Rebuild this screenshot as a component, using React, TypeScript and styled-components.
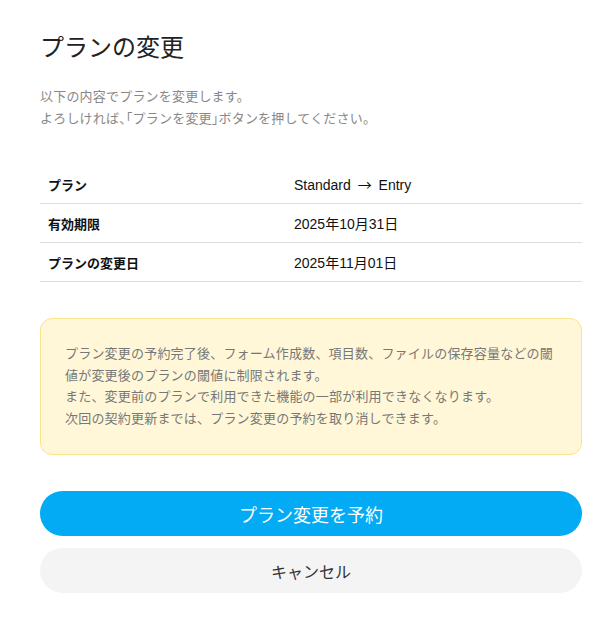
import React from "react";
import styled, { createGlobalStyle } from "styled-components";

const Global = createGlobalStyle`
  html, body { margin: 0; padding: 0; background: #fff; }
  body { font-family: "Liberation Sans", "Noto Sans CJK JP", sans-serif; color: #222; }
`;

const Page = styled.div`
  width: 542px;
  padding: 30px 28px 30px 40px;
  display: flex;
  flex-direction: column;
`;

const Title = styled.h1`
  margin: 0;
  font-size: 24px;
  font-weight: 400;
  line-height: 36px;
  color: #222;
`;

const Lead = styled.p`
  margin: 20px 0 0;
  font-size: 13px;
  line-height: 21px;
  letter-spacing: 0.2px;
  color: #888;
`;

const Punct = styled.span`
  font-family: "Noto Sans CJK JP", sans-serif;
  font-feature-settings: "halt";
`;

const Table = styled.div`
  margin-top: 36px;
  display: flex;
  flex-direction: column;
`;

const Row = styled.div`
  display: grid;
  grid-template-columns: 246px 1fr;
  height: 38px;
  align-items: center;
  padding: 0 8px;
  border-bottom: 1px solid #dedede;
`;

const Label = styled.div`
  font-size: 13px;
  font-weight: 700;
  color: #111;
`;

const Value = styled.div`
  font-size: 14px;
  color: #111;
`;

const Arrow = styled.span`
  font-family: "Noto Sans CJK JP", sans-serif;
  margin: 0 3px;
`;

const Notice = styled.div`
  margin-top: 36px;
  background: #fff7d8;
  border: 1px solid #fbe38c;
  border-radius: 12px;
  padding: 24px 24px 25px;
  font-size: 13px;
  line-height: 21.5px;
  letter-spacing: 0.2px;
  color: #777;
`;

const Actions = styled.div`
  margin-top: 36px;
  display: flex;
  flex-direction: column;
  gap: 12px;
`;

const Button = styled.button<{ $primary?: boolean }>`
  height: 45px;
  border: none;
  border-radius: 23px;
  font-family: inherit;
  font-size: ${(p) => (p.$primary ? "18px" : "16px")};
  background: ${(p) => (p.$primary ? "#03aaf4" : "#f4f4f4")};
  color: ${(p) => (p.$primary ? "#fff" : "#333")};
  cursor: pointer;
`;

export default function App() {
  return (
    <>
      <Global />
      <Page>
        <Title>プランの変更</Title>
        <Lead>
          以下の内容でプランを変更します。
          <br />
          よろしければ<Punct>、「</Punct>プランを変更<Punct>」</Punct>ボタンを押してください。
        </Lead>
        <Table>
          <Row>
            <Label>プラン</Label>
            <Value>
              Standard <Arrow>→</Arrow> Entry
            </Value>
          </Row>
          <Row>
            <Label>有効期限</Label>
            <Value>2025年10月31日</Value>
          </Row>
          <Row>
            <Label>プランの変更日</Label>
            <Value>2025年11月01日</Value>
          </Row>
        </Table>
        <Notice>
          プラン変更の予約完了後、フォーム作成数、項目数、ファイルの保存容量などの閾値が変更後のプランの閾値に制限されます。
          <br />
          また、変更前のプランで利用できた機能の一部が利用できなくなります。
          <br />
          次回の契約更新までは、プラン変更の予約を取り消しできます。
        </Notice>
        <Actions>
          <Button $primary>プラン変更を予約</Button>
          <Button>キャンセル</Button>
        </Actions>
      </Page>
    </>
  );
}
